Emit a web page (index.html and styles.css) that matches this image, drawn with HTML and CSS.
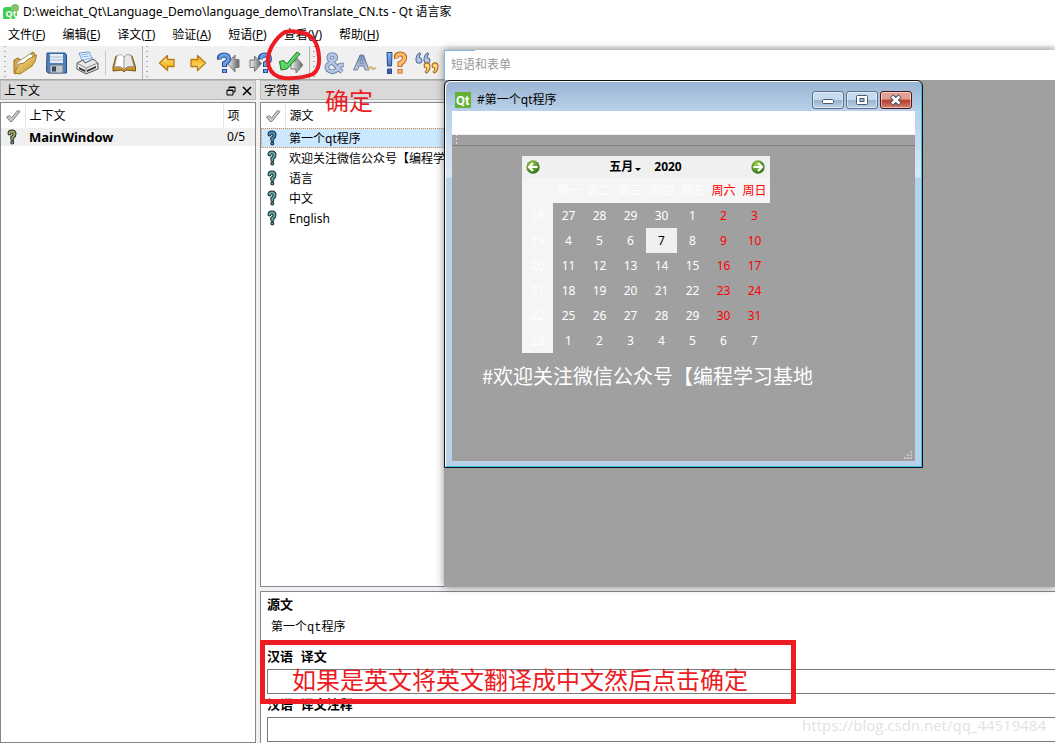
FILE: index.html
```html
<!DOCTYPE html>
<html lang="zh-CN">
<head>
<meta charset="utf-8">
<title>Qt 语言家</title>
<link rel="stylesheet" href="styles.css">
</head>
<body>
<svg class="defs" aria-hidden="true">
  <defs>
    <linearGradient id="gold" x1="0" y1="0" x2="0" y2="1"><stop offset="0" stop-color="#ffe98a"/><stop offset="1" stop-color="#f5a300"/></linearGradient>
    <linearGradient id="folder" x1="0" y1="0" x2="1" y2="1"><stop offset="0" stop-color="#f7dc92"/><stop offset="1" stop-color="#c8962a"/></linearGradient>
    <linearGradient id="steel" x1="0" y1="0" x2="1" y2="0"><stop offset="0" stop-color="#f4f4f4"/><stop offset="1" stop-color="#5c6266"/></linearGradient>
    <linearGradient id="blue" x1="0" y1="0" x2="0" y2="1"><stop offset="0" stop-color="#8cb4ea"/><stop offset="1" stop-color="#2c5cab"/></linearGradient>
    <linearGradient id="dusk" x1="0" y1="0" x2="0" y2="1"><stop offset="0" stop-color="#6d8cc4"/><stop offset="1" stop-color="#c3ccd8"/></linearGradient>
    <radialGradient id="ball" cx=".4" cy=".3" r=".8"><stop offset="0" stop-color="#9bd04c"/><stop offset="1" stop-color="#256314"/></radialGradient>
    <symbol id="question" viewBox="0 0 12 16">
      <g fill="none" stroke-linecap="round"><path d="M3.500 4.500Q3.500 2.500 6 2.500Q8.500 2.500 8.500 5Q8.500 7 6.300 8.500V10M6.300 13.400V13.500" stroke="#1d3038" stroke-width="4"/><path d="M3.500 4.500Q3.500 2.500 6 2.500Q8.500 2.500 8.500 5Q8.500 7 6.300 8.500V10M6.300 13.400V13.500" stroke="currentColor" stroke-width="2"/></g>
    </symbol>
    <symbol id="tick" viewBox="0 0 16 14"><path d="M1.500 8L4.500 6.500L6.500 9L12.500 1.500L15 2.500L7 12.500H5Z" fill="#c8c8c8" stroke="#858585"/></symbol>
    <symbol id="bigq" viewBox="0 0 14 22">
      <path d="M2.500 7.500Q2 3 7 3Q11.500 3 11.500 7Q11.500 9.500 7.500 11.500V15M7.500 17V21" fill="none" stroke="#1d4c96" stroke-width="5"/>
      <path d="M3 6.800Q3 3 7 3Q11.500 3 11.500 7Q11.500 9.500 7.500 11.500V14.300M7.500 17.700V20.300" fill="none" stroke="#6fa0e8" stroke-width="3"/>
    </symbol>
    <symbol id="arrow" viewBox="0 0 18 18"><path d="M1.500 9L9.500 1.500V5.500H16V12.500H9.500V16.500Z" fill="url(#gold)" stroke="#b87b17" stroke-width="1.300" stroke-linejoin="round"/></symbol>
    <symbol id="quote" viewBox="0 0 6 10"><path d="M2.500 9.300Q5.500 7.500 5.500 3.500Q5.500 .700 3 .700Q.600 .700 .600 3Q.600 5 2.800 5.200Q3.200 7 1.500 8.200Z" stroke-width=".9"/></symbol>
  </defs>
</svg>

<div class="app">
  <header class="titlebar">
    <svg class="app-icon" viewBox="0 0 16 16"><path d="M2 3H14V12L11 15H0V5Z" fill="#41cd52"/><circle cx="12" cy="4" r="4" fill="#86c06c"/><text x="2.500" y="12.500" class="logo-text">Qt</text></svg>
    <span>D:\weichat_Qt\Language_Demo\language_demo\Translate_CN.ts - Qt 语言家</span>
  </header>
  <nav class="menubar">
    <button>文件(<u>F</u>)</button><button>编辑(<u>E</u>)</button><button>译文(<u>T</u>)</button><button>验证(<u>A</u>)</button><button>短语(<u>P</u>)</button><button>查看(<u>V</u>)</button><button>帮助(<u>H</u>)</button>
  </nav>
  <div class="toolbar">
    <div class="group">
      <button aria-label="打开"><svg viewBox="0 0 24 24"><path d="M1 22L1 9L5 7L8 9L20 1L22 3L14 17L2 23Z" fill="#d6a547" stroke="#9d741d"/><path d="M3 18L5 11L17 3L20 4L18 12Z" fill="#fff" stroke="#999" stroke-width=".7"/><path d="M1.500 22L6 13L11 12L14 9L23.500 4Q23 11 19 15L7 23Z" fill="url(#folder)" stroke="#a87c22"/></svg></button>
      <button aria-label="保存"><svg viewBox="0 0 24 24"><path d="M3 2H21L22.500 4V22H4L2.500 20Z" fill="#4b80bf" stroke="#244e85"/><rect x="6" y="3" width="13" height="9" fill="#e7eef6"/><path d="M6 6H19M6 9H19" stroke="#aabccd"/><rect x="6" y="14" width="13" height="8" fill="#c3c8cd" stroke="#707b88"/><rect x="8" y="15.500" width="4" height="5" fill="#37475b"/></svg></button>
      <button aria-label="打印"><svg viewBox="0 0 24 24"><path d="M4 2L14 1L19 11L9 14Z" fill="#e7f1ff" stroke="#6f9bd6"/><path d="M6 4L13 3M7 6L14 5M8 9L16 7" stroke="#8ab0e3"/><path d="M2 12L8 9L10 12L18 8L23 12V18L11 23L2 18Z" fill="#e9e9e9" stroke="#555"/><path d="M2 12L11 17L23 12M11 17V23" fill="none" stroke="#888"/><path d="M4 16L10 19V21L4 18ZM12 19L21 15V17L12 21Z" fill="#333"/></svg></button>
      <span class="divider"></span>
      <button aria-label="短语书"><svg viewBox="0 0 24 24"><path d="M1 16L4 5L12 6L20 5L23.500 16V20L14 19L12 21L10 19L1 20Z" fill="#c99430" stroke="#7d5512"/><path d="M2.500 16L5 5Q10 2 12 6V18Q8 14 2.500 16Z" fill="#fff" stroke="#999" stroke-width=".7"/><path d="M12 6Q15 2 19 4L22 16Q16 14 12 18Z" fill="#e8e8e8" stroke="#888" stroke-width=".7"/></svg></button>
    </div>
    <div class="group">
      <button aria-label="上一个"><svg viewBox="0 0 24 24"><use href="#arrow" x="3" y="3" width="18" height="18"/></svg></button>
      <button aria-label="下一个"><svg viewBox="0 0 24 24"><use href="#arrow" x="3" y="3" width="18" height="18" transform="rotate(180 12 12)"/></svg></button>
      <button aria-label="上一个未完成"><svg viewBox="0 0 24 24"><path d="M10.500 12.500L18 4V8.500H22V16.500H18V21Z" fill="url(#steel)" stroke="#777"/><use href="#bigq" x="0" y="1" width="14" height="22"/></svg></button>
      <button aria-label="下一个未完成"><svg viewBox="0 0 24 24"><use href="#bigq" x="10" y="1" width="14" height="22"/><path d="M13.500 12.500L6.500 5V9H2V16.500H6.500V20.500Z" fill="url(#steel)" stroke="#777"/></svg></button>
      <button aria-label="完成并下一个"><svg viewBox="0 0 24 24"><path d="M24 14L17 6V10H12V18H17V22Z" fill="url(#steel)" stroke="#777"/><path d="M.500 10.500L5 9.500L7.500 13L18 1L21 3L8 18L2 19Z" fill="#5fd269" stroke="#188127" stroke-linejoin="round"/></svg></button>
    </div>
    <div class="group">
      <button aria-label="快捷键"><svg viewBox="0 0 24 24"><g fill="none" stroke-linejoin="round"><path d="M20 21L7 8Q6 3.500 10.500 3.500Q14.500 4 13.500 8L8 12Q3 15 6 19Q11 23 16 18L18 14H22" stroke="#6a80a8" stroke-width="4.600"/><path d="M20 21L7 8Q6 3.500 10.500 3.500Q14.500 4 13.500 8L8 12Q3 15 6 19Q11 23 16 18L18 14H21.500" stroke="#b4c5e1" stroke-width="2.800"/></g></svg></button>
      <button aria-label="标点"><svg viewBox="0 0 24 24"><path d="M.500 19L7 4H10.500L16 19H12L10.500 15H6L4.500 19ZM7 12H10L8.500 8Z" fill="url(#dusk)" stroke="#5c7092" stroke-width=".8"/><path d="M15 18Q17 15 19 17Q21 19 23 16.500" fill="none" stroke="#cdb171" stroke-width="2"/></svg></button>
      <button aria-label="短语检查"><svg viewBox="0 0 24 24"><path d="M3 1.500H8L7.500 15H3.500ZM3.500 18H7.500V22.500H3.500Z" fill="url(#blue)" stroke="#234b8d"/><path d="M12.500 7.500Q11.500 3 16 3Q21 3 20.500 7.500Q20 10.500 16 12.500V16M16 18V22.500" fill="none" stroke="#b5621f" stroke-width="5"/><path d="M12.700 6.800Q12.500 3 16 3Q21 3 20.500 7.500Q20 10.500 16 12.500V15.300M16 18.700V21.800" fill="none" stroke="#ffbb69" stroke-width="3.200"/></svg></button>
      <button aria-label="占位符"><svg viewBox="0 0 24 24"><g fill="#b6c7e3" stroke="#536e9c"><use href="#quote" x="0" y="1" width="8" height="12" transform="rotate(180 4 7)"/><use href="#quote" x="8" y="1" width="8" height="12" transform="rotate(180 12 7)"/></g><g fill="#ffd77c" stroke="#a56b18"><use href="#quote" x="8" y="11" width="8" height="12"/><use href="#quote" x="16" y="11" width="8" height="12"/></g></svg></button>
    </div>
  </div>

  <main class="workspace">
    <section class="dock contexts">
      <div class="dock-title"><h2>上下文</h2>
        <button aria-label="浮动"><svg viewBox="0 0 10 10"><path d="M3 3V1H9V6H7M3 1.500H9M1 4H7V9H1ZM1 4.500H7" fill="none" stroke="#000"/></svg></button>
        <button aria-label="关闭"><svg viewBox="0 0 10 10"><path d="M1 1L9 9M9 1L1 9" stroke="#000" stroke-width="1.500"/></svg></button>
      </div>
      <div class="list">
        <table>
          <thead><tr><th class="mark"><svg class="tick"><use href="#tick"/></svg></th><th>上下文</th><th class="count">项</th></tr></thead>
          <tbody><tr class="current"><td class="mark"><svg class="q olive"><use href="#question"/></svg></td><td>MainWindow</td><td class="count">0/5</td></tr></tbody>
        </table>
      </div>
    </section>

    <div class="right">
      <section class="dock strings">
        <div class="dock-title"><h2>字符串</h2></div>
        <div class="list">
          <table>
            <thead><tr><th class="mark"><svg class="tick"><use href="#tick"/></svg></th><th>源文</th></tr></thead>
            <tbody>
              <tr class="selected"><td class="mark"><svg class="q azure"><use href="#question"/></svg></td><td>第一个qt程序</td></tr>
              <tr><td class="mark"><svg class="q"><use href="#question"/></svg></td><td>欢迎关注微信公众号【编程学习基地</td></tr>
              <tr><td class="mark"><svg class="q"><use href="#question"/></svg></td><td>语言</td></tr>
              <tr><td class="mark"><svg class="q"><use href="#question"/></svg></td><td>中文</td></tr>
              <tr><td class="mark"><svg class="q"><use href="#question"/></svg></td><td>English</td></tr>
            </tbody>
          </table>
        </div>
      </section>
      <section class="editor">
        <h3>源文</h3>
        <p>第一个qt程序</p>
        <label for="translation">汉语 译文</label>
        <input id="translation" type="text">
        <label for="comment">汉语 译文注释</label>
        <input id="comment" type="text">
      </section>
    </div>
  </main>

  <section class="forms">
    <h2>短语和表单</h2>
    <div class="preview">
      <header class="preview-title">
        <svg class="qt-logo" viewBox="0 0 16 16"><rect width="16" height="16" rx="1" fill="#62b132"/><text x="1" y="13" class="qt-text">Qt</text></svg>
        <span>#第一个qt程序</span>
        <div class="controls">
          <button aria-label="最小化"><svg viewBox="0 0 30 16"><rect x="9.500" y="7.500" width="11" height="4" rx="1" fill="#fff" stroke="#4d5868"/></svg></button>
          <button aria-label="最大化"><svg viewBox="0 0 30 16"><rect x="9.500" y="3.500" width="11" height="9" rx="1" fill="#fff" stroke="#4d5868"/><rect x="13" y="6.500" width="4" height="3" fill="#9fc0df" stroke="#4d5868"/></svg></button>
          <button class="close" aria-label="关闭"><svg viewBox="0 0 30 16"><path d="M10.500 4L19 12M19 4L10.500 12" stroke="#4d5060" stroke-width="4.600"/><path d="M11 4.500L18.500 11.500M18.500 4.500L11 11.500" stroke="#fff" stroke-width="2.600"/></svg></button>
        </div>
      </header>
      <div class="client">
        <div class="client-menu"></div>
        <div class="client-tools"></div>
        <div class="calendar">
          <div class="cal-nav">
            <button aria-label="上个月"><svg viewBox="0 0 14 14"><circle cx="7" cy="7" r="6.700" fill="url(#ball)"/><path d="M7 3L3 7L7 11M3.500 7H11.500" fill="none" stroke="#fff" stroke-width="2.200"/></svg></button>
            <div class="cal-month"><button>五月<i></i></button><button>2020</button></div>
            <button aria-label="下个月"><svg viewBox="0 0 14 14"><circle cx="7" cy="7" r="6.700" fill="url(#ball)"/><path d="M7 3L11 7L7 11M10.500 7H2.500" fill="none" stroke="#fff" stroke-width="2.200"/></svg></button>
          </div>
          <table>
            <thead><tr><th></th><th>周一</th><th>周二</th><th>周三</th><th>周四</th><th>周五</th><th>周六</th><th>周日</th></tr></thead>
            <tbody>
              <tr><th>18</th><td>27</td><td>28</td><td>29</td><td>30</td><td>1</td><td class="we">2</td><td class="we">3</td></tr>
              <tr><th>19</th><td>4</td><td>5</td><td>6</td><td class="today">7</td><td>8</td><td class="we">9</td><td class="we">10</td></tr>
              <tr><th>20</th><td>11</td><td>12</td><td>13</td><td>14</td><td>15</td><td class="we">16</td><td class="we">17</td></tr>
              <tr><th>21</th><td>18</td><td>19</td><td>20</td><td>21</td><td>22</td><td class="we">23</td><td class="we">24</td></tr>
              <tr><th>22</th><td>25</td><td>26</td><td>27</td><td>28</td><td>29</td><td class="we">30</td><td class="we">31</td></tr>
              <tr><th>23</th><td>1</td><td>2</td><td>3</td><td>4</td><td>5</td><td>6</td><td>7</td></tr>
            </tbody>
          </table>
        </div>
        <p class="slogan">#欢迎关注微信公众号【编程学习基地</p>
        <svg class="grip" viewBox="0 0 8 8"><path d="M6 0h2v2h-2zM3 3h2v2h-2zM6 3h2v2h-2zM0 6h2v2h-2zM3 6h2v2h-2zM6 6h2v2h-2z" fill="#c4c4c4"/></svg>
      </div>
    </div>
  </section>

  <svg class="note-circle" viewBox="0 0 58 54"><path d="M42 6Q30 2 20 4Q13 8 7 18Q1 29 4 39Q8 49 19 50Q36 51 48 46Q55 41 54 29Q53 12 43 7Q38 4 32 4" fill="none" stroke="#ed1c24" stroke-width="4" stroke-linecap="round" stroke-linejoin="round"/></svg>
  <span class="note note-ok">确定</span>
  <div class="note note-box">如果是英文将英文翻译成中文然后点击确定</div>
  <span class="watermark">https://blog.csdn.net/qq_44519484</span>
</div>
</body>
</html>
```
FILE: styles.css
```css
* { box-sizing: border-box; }
body { margin: 0; background: #fff; color: #000; font: 12px/16px "Noto Sans", "Noto Sans CJK SC", sans-serif; }
h2, h3, p { margin: 0; font-size: 12px; font-weight: 400; }
button { padding: 0; border: 0; background: none; color: inherit; font: inherit; }
table { width: 100%; border-collapse: collapse; table-layout: fixed; }
th, td { padding: 0; font-weight: 400; text-align: left; white-space: nowrap; }
svg { display: block; }
.defs { position: absolute; width: 0; height: 0; }
.app { position: relative; display: flex; flex-direction: column; height: 100vh; min-height: 600px; overflow: hidden; }

.titlebar { display: flex; align-items: center; gap: 4px; height: 24px; padding-left: 3px; white-space: nowrap; }
.app-icon { width: 16px; height: 16px; }
.logo-text { font: bold 9px "Open Sans", sans-serif; fill: #fff; }
.menubar { display: flex; gap: 1px; height: 22px; }
.menubar button { padding: 0 8px; white-space: nowrap; }

.toolbar { display: flex; flex: none; height: 34px; padding-left: 1px; background: #f0f0f0; border-bottom: 1px solid #a8a8a8; }
.group { display: flex; align-items: center; padding: 0 3px 0 8px; border-right: 1px solid #b4b4b4; background: radial-gradient(circle, #aaa 1px, transparent 1px) 2px 3px / 4px 5px repeat-y; }
.group:last-child { border-right: 0; }
.group button { display: grid; place-items: center; width: 31px; height: 30px; }
.group svg { width: 24px; height: 24px; }
.divider { width: 1px; height: 24px; margin: 0 2px 0 3px; background: #c8c8c8; }

.workspace { display: flex; flex: 1; gap: 4px; min-height: 0; background: #f0f0f0; }
.contexts { width: 256px; flex: none; }
.right { display: flex; flex: 1; flex-direction: column; gap: 4px; min-width: 0; }
.dock { display: flex; flex-direction: column; gap: 2px; }
.strings { flex: 1; min-height: 0; }
.dock-title { display: flex; align-items: center; gap: 6px; height: 20px; padding: 1px 3px 0; background: #d9d9d9; border: 1px solid #bcbcbc; }
.dock-title h2 { flex: 1; }
.dock-title svg { width: 10px; height: 10px; }
.list { flex: 1; min-height: 0; overflow: hidden; background: #fff; border: 1px solid #828790; }
.list thead th { height: 25px; border-right: 1px solid #e5e5e5; }
.list th + th, .list td + td { padding-left: 4px; }
.list .mark { width: 24px; }
.list .count { width: 32px; border-right: 0; }
.list .mark svg { margin: 0 auto; }
.tick { width: 16px; height: 14px; }
.list .mark .q { width: 12px; height: 16px; margin-left: 5px; color: #62a7a0; }
.list .mark .olive { color: #a9aa52; }
.list .mark .azure { color: #4691c4; }
.list .current td { height: 18px; background: #f0f0f0; }
.list .current td:nth-child(2) { font-size: 13px; font-weight: 700; line-height: 16px; }
.strings tbody td { height: 20px; }
.strings tbody td + td { padding-top: 2px; }
.strings tbody .selected { background: #cce8ff; outline: 1px dotted #e58a3c; outline-offset: -1px; }

.editor { display: flex; flex: none; flex-direction: column; height: 152px; padding: 4px 0 0 6px; background: #fff; border: 1px solid #828790; border-width: 1px 0 0 1px; font-family: "Liberation Mono", "Noto Sans CJK SC", monospace; }
.editor h3, .editor label { flex: none; font-size: 13px; font-weight: 700; line-height: 20px; }
.editor p { flex: none; padding-left: 4px; margin-bottom: 7px; line-height: 25px; }
.editor input { flex: none; width: 100%; height: 25px; margin: 1px 0 2px; padding: 0 4px; border: 1px solid #7a7a7a; border-right: 0; font: inherit; }

.forms { position: absolute; top: 50px; right: 0; bottom: 156px; left: 444px; background: #a0a0a0; box-shadow: 0 0 8px rgba(0, 0, 0, .45); }
.forms > h2 { height: 30px; padding-left: 6px; border-left: 1px solid #7cb4e4; background: linear-gradient(#7cb4e4, #7cb4e4) 0 0 / 30px 1px no-repeat #fff; color: #999; line-height: 29px; }
.preview { width: 479px; padding: 1px 6px 6px; background: linear-gradient(#99b4d1, #b9d1ea 30px, #dbe7f5 96px, #b9d1ea 97px); border: 1px solid #111; border-radius: 6px 6px 0 0; box-shadow: inset 1px 1px #fff, inset -1px -1px #35c3e3; }
.preview-title { display: flex; align-items: center; gap: 6px; height: 29px; padding: 7px 4px 0; }
.qt-logo { width: 16px; height: 16px; }
.qt-text { font: bold 13px "Roboto", sans-serif; fill: #fff; }
.controls { display: flex; gap: 2px; margin-left: auto; }
.controls button { width: 32px; height: 18px; border: 1px solid #5d708b; border-radius: 3px; background: linear-gradient(#c7dbee 48%, #98b2cc 50%, #bcd3e9); box-shadow: inset 0 0 0 1px rgba(255, 255, 255, .5); }
.controls .close { border-color: #4b1720; background: linear-gradient(#e0a094 45%, #b83a25 50%, #d28170); }
.client { position: relative; height: 350px; margin: 0 1px; background: #a0a0a0; }
.client-menu { height: 24px; background: #fff; border-bottom: 1px solid #eee; }
.client-tools { height: 11px; border-bottom: 1px solid #7f7f7f; background: radial-gradient(circle, #ddd 1px, transparent 1px) 3px 2px / 3px 4px repeat-y; }
.calendar { width: 248px; margin: 10px 0 0 70px; color: #fff; }
.cal-nav { display: flex; align-items: center; justify-content: space-between; height: 22px; padding: 0 5px 0 4px; background: #f0f0f0; color: #000; font-weight: 700; }
.cal-nav svg { width: 14px; height: 14px; }
.cal-month { display: flex; gap: 13px; }
.cal-month i { display: inline-block; margin-left: 2px; border: 3px solid transparent; border-top-color: #000; border-bottom: 0; }
.calendar th, .calendar td { height: 25px; text-align: center; }
.calendar th { background: #f5f5f5; }
.calendar thead th:nth-child(n + 7), .calendar .we { color: #f00; }
.calendar .today { background: #f0f0f0; color: #000; }
.slogan { margin: 9px 0 0 30px; font: 20px/28px "Noto Sans CJK SC", sans-serif; color: #fff; }
.grip { position: absolute; right: 3px; bottom: 2px; width: 8px; height: 8px; }

.note-circle { position: absolute; top: 28px; left: 265px; width: 58px; height: 54px; }
.note { position: absolute; color: #ed1c24; font: 24px/32px "Noto Sans CJK SC", sans-serif; white-space: nowrap; }
.note-ok { top: 84px; left: 325px; }
.note-box { bottom: 39px; left: 260px; width: 536px; height: 64px; padding: 18px 27px 0; border: 5px solid #ed1c24; }
.watermark { position: absolute; right: 9px; bottom: 8px; color: #e2e2e2; font: 15px/20px "Open Sans", sans-serif; }
```
